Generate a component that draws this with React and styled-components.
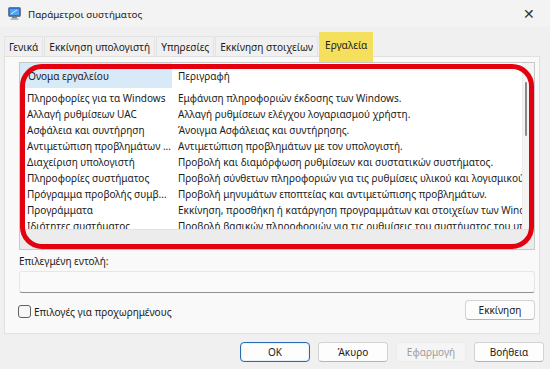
import React from "react";
import styled, { createGlobalStyle } from "styled-components";

const Global = createGlobalStyle`
  html, body { margin: 0; padding: 0; background: #f0f0f0; }
  body { font-family: "Noto Sans", "Open Sans", sans-serif; color: #1b1b1b; }
  * { box-sizing: border-box; }
`;

const Window = styled.div`
  width: 550px;
  height: 369px;
  display: flex;
  flex-direction: column;
  background: #f0f0f0;
  position: relative;
  overflow: hidden;
`;

const TitleBar = styled.div`
  height: 27px;
  display: flex;
  align-items: center;
  padding: 0 15px 0 8px;
  gap: 7px;
  font-size: 9.8px;
  background: #f3f3f3;
`;

const Title = styled.span`
  flex: 1;
  padding-top: 1px;
`;

const Close = styled.span`
  font-size: 14px;
  font-weight: 300;
  color: #333;
  line-height: 1;
`;

const TabStrip = styled.div`
  display: flex;
  align-items: flex-end;
  padding: 9px 0 0 4px;
  height: 29px;
  position: relative;
  z-index: 2;
`;

const Tab = styled.div`
  height: ${(p) => (p.$active ? "30px" : "20px")};
  margin-bottom: ${(p) => (p.$active ? "-6px" : "0")};
  padding: 0 ${(p) => (p.$active ? "5px" : "4px")};
  display: flex;
  align-items: ${(p) => (p.$active ? "flex-start" : "center")};
  padding-top: ${(p) => (p.$active ? "5px" : "0")};
  font-size: 10.1px;
  background: ${(p) => (p.$active ? "#f4e05d" : "#f0f0f0")};
  border: 1px solid ${(p) => (p.$active ? "#f4e05d" : "#e3e3e3")};
  border-bottom: none;
  margin-right: ${(p) => (p.$active ? "0" : "1px")};
  white-space: nowrap;
`;

const Panel = styled.div`
  margin: 0 10px 0 4px;
  height: 278px;
  background: #f9f9f9;
  border: 1px solid #e0e0e0;
  padding: 5px 4px 0 14px;
  display: flex;
  flex-direction: column;
`;

const ListWrap = styled.div`
  position: relative;
  height: 188px;
`;

const ListBox = styled.div`
  height: 100%;
  border: 1px solid #c8c8c8;
  background: #ffffff;
  display: grid;
  grid-template-columns: 1fr 12px;
  grid-template-rows: 1fr 20px;
  overflow: hidden;
`;

const ListBody = styled.div`
  overflow: hidden;
  display: flex;
  flex-direction: column;
`;

const Row = styled.div`
  display: grid;
  grid-template-columns: 152px 1fr;
  height: ${(p) => (p.$header ? "25px" : "16px")};
  align-items: center;
  font-size: 10px;
  white-space: nowrap;
  flex-shrink: 0;
  margin-bottom: ${(p) => (p.$header ? "2px" : "0")};
`;

const Cell = styled.div`
  height: 100%;
  display: flex;
  align-items: center;
  padding-left: ${(p) => (p.$first ? "7px" : "6px")};
  background: ${(p) => (p.$hl ? "#d8e9f8" : "transparent")};
  overflow: hidden;
`;

const VScroll = styled.div`
  background: #f4f4f4;
  border-left: 1px solid #ececec;
  position: relative;
`;

const Thumb = styled.div`
  position: absolute;
  left: 2px;
  top: 19px;
  width: 2px;
  height: 54px;
  background: #8a8a8a;
  border-radius: 1px;
`;

const HScroll = styled.div`
  background: #ececec;
  grid-column: 1 / 3;
  border-top: 1px solid #e2e2e2;
`;

const RedMark = styled.div`
  position: absolute;
  left: 1px;
  top: 2px;
  right: 1px;
  bottom: 1px;
  border: 5px solid #e3000f;
  border-radius: 22px;
  pointer-events: none;
`;

const FieldLabel = styled.div`
  font-size: 10px;
  margin-top: 3px;
  height: 16px;
  display: flex;
  align-items: center;
`;

const Input = styled.div`
  height: 22px;
  margin-top: 2px;
  background: #fafafa;
  border: 1px solid #e6e6e6;
  border-bottom: 1px solid #8f8f8f;
  border-radius: 3px;
`;

const OptionsRow = styled.div`
  display: flex;
  align-items: center;
  justify-content: space-between;
  margin-top: 7px;
`;

const CheckLabel = styled.label`
  display: flex;
  align-items: center;
  gap: 3px;
  font-size: 10px;
  margin-left: -1px;
  padding-top: 3px;
`;

const Box = styled.span`
  width: 13px;
  height: 13px;
  border: 1px solid #5f5f5f;
  border-radius: 3px;
  background: #f6f6f6;
`;

const Button = styled.div`
  width: 70px;
  height: 20px;
  display: flex;
  align-items: center;
  justify-content: center;
  font-size: 10px;
  background: ${(p) => (p.$disabled ? "#f5f5f5" : "#fdfdfd")};
  color: ${(p) => (p.$disabled ? "#9d9d9d" : "#1b1b1b")};
  border: 1px solid ${(p) => (p.$primary ? "#2a6bb8" : p.$disabled ? "#ececec" : "#d3d3d3")};
  border-bottom-color: ${(p) => (p.$primary ? "#2a6bb8" : p.$disabled ? "#ececec" : "#b4b4b4")};
  border-radius: 4px;
  box-shadow: ${(p) => (p.$primary ? "inset 0 0 0 1px #e7f0fa" : "none")};
`;

const Footer = styled.div`
  display: flex;
  justify-content: flex-end;
  gap: 8px;
  padding: 8px 6px 0 0;
`;

const Cursor = styled.svg`
  position: absolute;
  left: 340px;
  top: 40px;
`;

const rows = [
  ["Πληροφορίες για τα Windows", "Εμφάνιση πληροφοριών έκδοσης των Windows."],
  ["Αλλαγή ρυθμίσεων UAC", "Αλλαγή ρυθμίσεων ελέγχου λογαριασμού χρήστη."],
  ["Ασφάλεια και συντήρηση", "Άνοιγμα Ασφάλειας και συντήρησης."],
  ["Αντιμετώπιση προβλημάτων ...", "Αντιμετώπιση προβλημάτων με τον υπολογιστή."],
  ["Διαχείριση υπολογιστή", "Προβολή και διαμόρφωση ρυθμίσεων και συστατικών συστήματος."],
  ["Πληροφορίες συστήματος", "Προβολή σύνθετων πληροφοριών για τις ρυθμίσεις υλικού και λογισμικού."],
  ["Πρόγραμμα προβολής συμβ...", "Προβολή μηνυμάτων εποπτείας και αντιμετώπισης προβλημάτων."],
  ["Προγράμματα", "Εκκίνηση, προσθήκη ή κατάργηση προγραμμάτων και στοιχείων των Windows."],
  ["Ιδιότητες συστήματος", "Προβολή βασικών πληροφοριών για τις ρυθμίσεις του συστήματος του υπολογιστή."],
];

function AppIcon() {
  return (
    <svg width="13" height="13" viewBox="0 0 13 13">
      <rect x="0.5" y="0.5" width="12" height="9" rx="1" fill="#2f6fd1" stroke="#6b7a8c" />
      <rect x="2" y="2" width="9" height="6" fill="#4fa3f0" />
      <path d="M3 7 L9 3" stroke="#d8ecff" strokeWidth="1" />
      <rect x="4" y="10" width="5" height="1.5" fill="#7b8794" />
      <rect x="2.5" y="11.5" width="8" height="1.2" fill="#9aa4ae" />
    </svg>
  );
}

export default function App() {
  return (
    <>
      <Global />
      <Window>
        <TitleBar>
          <AppIcon />
          <Title>Παράμετροι συστήματος</Title>
          <Close>✕</Close>
        </TitleBar>
        <TabStrip>
          <Tab>Γενικά</Tab>
          <Tab>Εκκίνηση υπολογιστή</Tab>
          <Tab>Υπηρεσίες</Tab>
          <Tab>Εκκίνηση στοιχείων</Tab>
          <Tab $active>Εργαλεία</Tab>
        </TabStrip>
        <Panel>
          <ListWrap>
            <ListBox>
              <ListBody>
                <Row $header>
                  <Cell $first $hl>Όνομα εργαλείου</Cell>
                  <Cell>Περιγραφή</Cell>
                </Row>
                {rows.map(([a, b]) => (
                  <Row key={a}>
                    <Cell $first>{a}</Cell>
                    <Cell>{b}</Cell>
                  </Row>
                ))}
              </ListBody>
              <VScroll>
                <Thumb />
              </VScroll>
              <HScroll />
            </ListBox>
            <RedMark />
          </ListWrap>
          <FieldLabel>Επιλεγμένη εντολή:</FieldLabel>
          <Input />
          <OptionsRow>
            <CheckLabel>
              <Box />
              Επιλογές για προχωρημένους
            </CheckLabel>
            <Button>Εκκίνηση</Button>
          </OptionsRow>
        </Panel>
        <Footer>
          <Button $primary>OK</Button>
          <Button>Άκυρο</Button>
          <Button $disabled>Εφαρμογή</Button>
          <Button>Βοήθεια</Button>
        </Footer>
        <Cursor width="14" height="20" viewBox="0 0 14 20">
          <path d="M1 1 L1 16 L4.5 12.5 L7 18.5 L9.5 17.5 L7 11.5 L12 11.5 Z" fill="#111" stroke="#fff" strokeWidth="1" />
        </Cursor>
      </Window>
    </>
  );
}
